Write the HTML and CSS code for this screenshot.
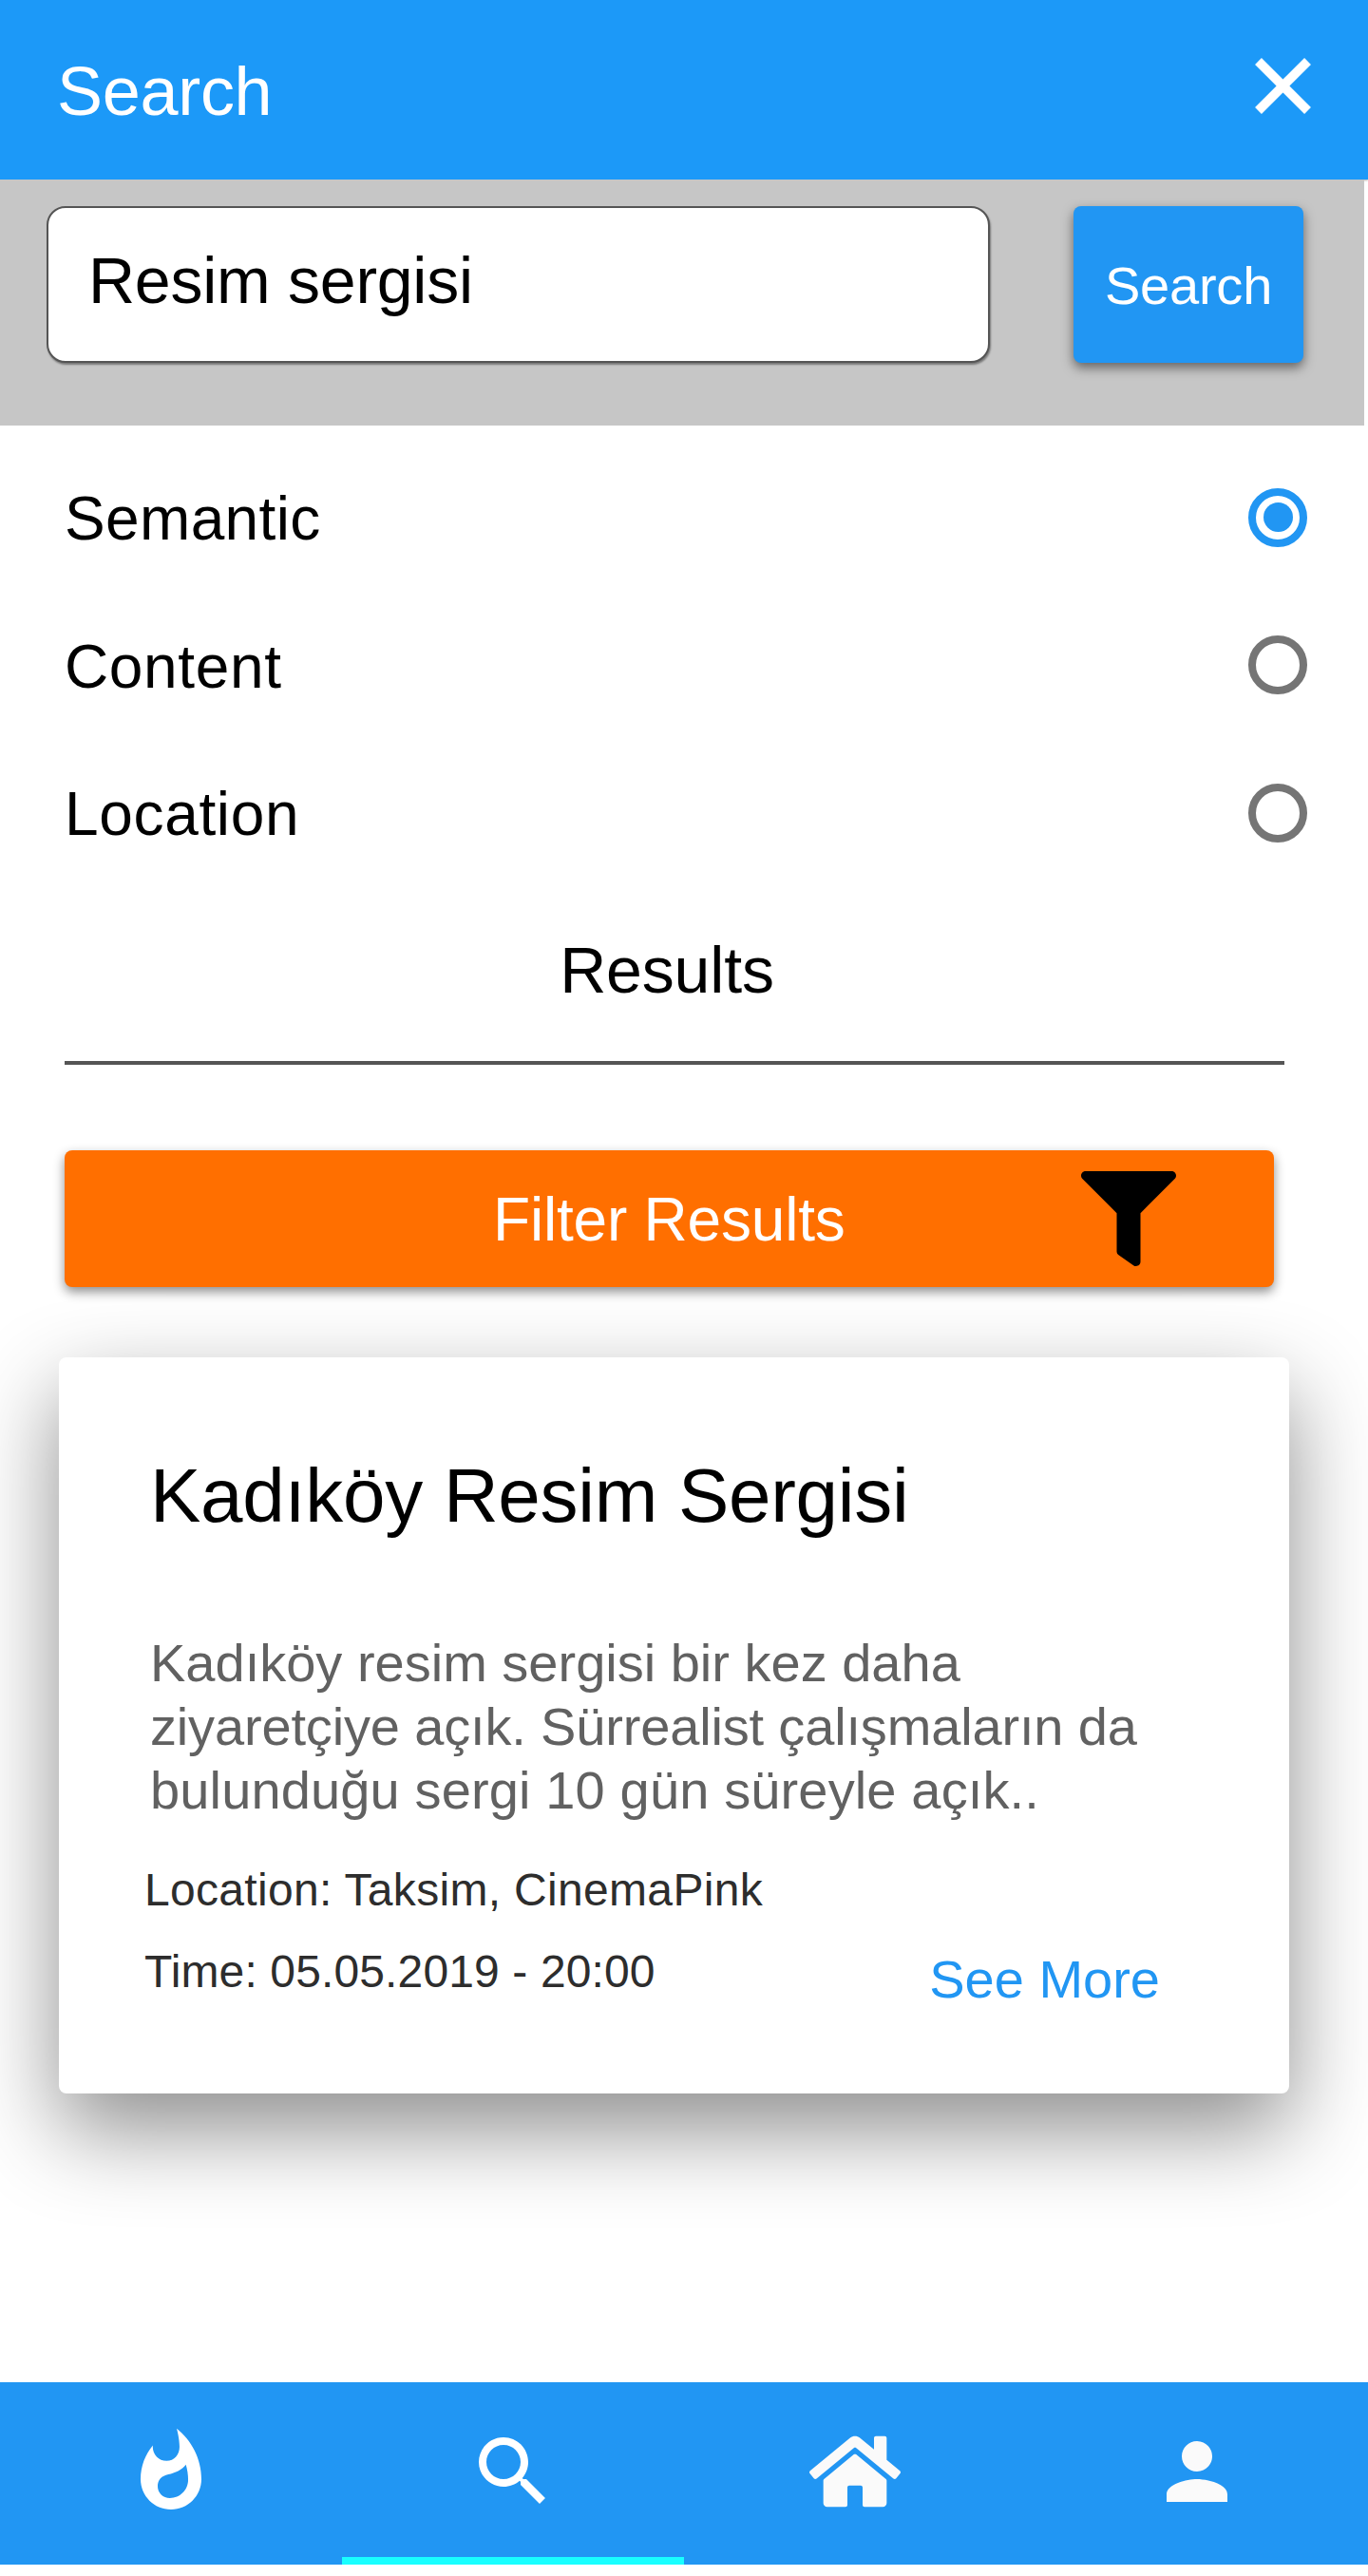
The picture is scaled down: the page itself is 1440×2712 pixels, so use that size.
FILE: index.html
```html
<!DOCTYPE html>
<html lang="tr">
<head>
  <meta charset="utf-8">
  <title>Search</title>
  <link rel="stylesheet" href="styles.css">
</head>
<body>
  <div class="app">
    <header class="topbar">
      <h1 class="topbar-title">Search</h1>
      <svg class="topbar-close" viewBox="0 0 24 24"><path d="M19 6.64L17.36 5 12 10.36 6.64 5 5 6.64 10.36 12 5 17.36 6.64 19 12 13.64 17.36 19 19 17.36 13.64 12z"/></svg>
    </header>

    <form class="searchbar">
      <input class="search-input" type="text" value="Resim sergisi">
      <button class="search-button" type="button">Search</button>
    </form>

    <main class="content">
      <ul class="options">
        <li class="option"><span class="option-label">Semantic</span><span class="radio radio-on"></span></li>
        <li class="option"><span class="option-label option-label-wide">Content</span><span class="radio"></span></li>
        <li class="option"><span class="option-label option-label-wide">Location</span><span class="radio"></span></li>
      </ul>

      <h2 class="results-title">Results</h2>

      <button class="filter" type="button">
        <span class="filter-label">Filter Results</span>
        <svg class="filter-icon" viewBox="0 0 512 512"><path d="M487.976 0H24.028C2.71 0-8.047 25.866 7.058 40.971L192 225.941V432c0 7.831 3.821 15.17 10.237 19.662l80 55.98C298.02 518.69 320 507.493 320 487.98V225.941l184.947-184.97C520.021 25.896 509.338 0 487.976 0z"/></svg>
      </button>

      <article class="card">
        <h3 class="card-title">Kadıköy Resim Sergisi</h3>
        <p class="card-text">Kadıköy resim sergisi bir kez daha<br><span class="tight">ziyaretçiye açık. Sürrealist çalışmaların da</span><br><span class="loose">bulunduğu sergi 10 gün süreyle açık..</span></p>
        <p class="card-place">Location: Taksim, CinemaPink</p>
        <div class="card-foot">
          <span class="card-time">Time: 05.05.2019 - 20:00</span>
          <a class="card-more">See More</a>
        </div>
      </article>
    </main>

    <nav class="tabs">
      <a class="tab"><svg class="icon" viewBox="0 0 24 24"><path d="M13.5.67s.74 2.65.74 4.8c0 2.06-1.35 3.73-3.41 3.73-2.07 0-3.63-1.67-3.63-3.73l.03-.36C5.21 7.51 4 10.62 4 14c0 4.42 3.58 8 8 8s8-3.58 8-8C20 8.61 17.41 3.8 13.5.67zM11.71 19c-1.78 0-3.22-1.4-3.22-3.14 0-1.62 1.05-2.76 2.81-3.12 1.77-.36 3.6-1.21 4.62-2.58.39 1.29.59 2.65.59 4.04 0 2.65-2.15 4.8-4.8 4.8z"/></svg></a>
      <a class="tab tab-active"><svg class="icon" viewBox="0 0 24 24"><path d="M15.5 14h-.79l-.28-.27C15.41 12.59 16 11.11 16 9.5 16 5.91 13.09 3 9.5 3S3 5.91 3 9.5 5.91 16 9.5 16c1.61 0 3.09-.59 4.23-1.57l.27.28v.79l5 4.99L20.49 19l-4.99-5zm-6 0C7.01 14 5 11.99 5 9.5S7.01 5 9.5 5 14 7.01 14 9.5 11.99 14 9.5 14z"/></svg></a>
      <a class="tab"><svg class="icon icon-soft" viewBox="0 -32 576 576"><path d="M488 312.7V456c0 13.3-10.7 24-24 24H348c-6.6 0-12-5.4-12-12V356c0-6.6-5.4-12-12-12h-72c-6.6 0-12 5.4-12 12v112c0 6.6-5.4 12-12 12H112c-13.3 0-24-10.7-24-24V312.7c0-3.6 1.6-7 4.4-9.3l188-154.8c4.4-3.6 10.8-3.6 15.3 0l188 154.8c2.7 2.3 4.3 5.7 4.3 9.3zm83.6-60.9L488 182.9V44.4c0-6.6-5.4-12-12-12h-56c-6.6 0-12 5.4-12 12V117l-89.5-73.7c-17.7-14.6-43.3-14.6-61 0L4.4 251.8c-5.1 4.2-5.8 11.8-1.6 16.9l25.5 31c4.2 5.1 11.8 5.8 16.9 1.6l235.2-193.7c4.4-3.6 10.8-3.6 15.3 0l235.2 193.7c5.1 4.2 12.7 3.5 16.9-1.6l25.5-31c4.2-5.2 3.4-12.7-1.7-16.9z"/></svg></a>
      <a class="tab"><svg class="icon icon-soft" viewBox="0 0 24 24"><path d="M12 12c2.21 0 4-1.79 4-4s-1.79-4-4-4-4 1.79-4 4 1.79 4 4 4zm0 2c-2.67 0-8 1.34-8 4v2h16v-2c0-2.66-5.33-4-8-4z"/></svg></a>
    </nav>
  </div>
</body>
</html>
```
FILE: styles.css
```css
* {
  box-sizing: border-box;
}

body {
  margin: 0;
  background: #fff;
}

body,
input,
button {
  font-family: "Liberation Sans", Arial, Helvetica, sans-serif;
}

h1, h2, h3, p, ul {
  margin: 0;
  padding: 0;
  font-weight: 400;
}

.app {
  display: flex;
  flex-direction: column;
  width: 1440px;
  height: 2712px;
  padding-bottom: 12px;
  overflow: hidden;
}

.topbar {
  display: flex;
  justify-content: space-between;
  flex: none;
  height: 189px;
  padding: 40px 39px 0 60px;
  background: #1c99f8;
  box-shadow: 0 1px 2px rgba(0, 0, 0, .3);
}

.topbar-title {
  margin-top: 14px;
  color: #fff;
  font-size: 72px;
  letter-spacing: -.3px;
  line-height: 84px;
}

.topbar-close {
  width: 101px;
  height: 101px;
  fill: #fff;
}

.searchbar {
  position: relative;
  display: flex;
  justify-content: space-between;
  flex: none;
  width: 1436px;
  height: 259px;
  padding: 28px 64px 66px 49px;
  background: #c6c6c6;
}

.search-input {
  width: 993px;
  height: 165px;
  padding: 0 0 10px 42px;
  border: 2px solid #555;
  border-radius: 20px;
  background: #fff;
  color: #000;
  font-size: 68px;
  letter-spacing: -.25px;
  box-shadow: 1px 2px 2px rgba(0, 0, 0, .4);
}

.search-button {
  width: 242px;
  height: 165px;
  padding: 2px 0 0;
  border: 0;
  border-radius: 8px;
  background: #2196f3;
  color: #fff;
  font-size: 56px;
  letter-spacing: -.2px;
  box-shadow: 0 5px 12px rgba(0, 0, 0, .5);
}

.content {
  display: flex;
  flex-direction: column;
  padding: 19px 83px 0 62px;
}

.options {
  margin: 0 -19px 0 6px;
  list-style: none;
}

.option {
  display: flex;
  align-items: center;
  justify-content: space-between;
  height: 155.5px;
  color: #000;
  font-size: 64px;
}

.option-label {
  padding-top: 3px;
  letter-spacing: .35px;
}

.option-label-wide {
  letter-spacing: .65px;
}

.radio {
  display: grid;
  place-items: center;
  width: 62px;
  height: 62px;
  border: 8px solid #757575;
  border-radius: 50%;
}

.radio-on {
  border-color: #2196f3;
}

.radio-on::after {
  content: "";
  width: 31px;
  height: 31px;
  border-radius: 50%;
  background: #2196f3;
}

.results-title {
  height: 140px;
  margin: 47px 5px 0 6px;
  padding: 0 16px 0 0;
  border-bottom: 4px solid #555;
  color: #000;
  font-size: 68px;
  letter-spacing: -.15px;
  line-height: 80px;
  text-align: center;
}

.filter {
  display: flex;
  align-items: center;
  justify-content: space-between;
  height: 144px;
  margin: 90px 16px 0 6px;
  padding: 0 103px 0 451px;
  border: 0;
  border-radius: 8px;
  background: #ff6f00;
  color: #fff;
  font-size: 64px;
  box-shadow: 0 5px 12px rgba(0, 0, 0, .45);
}

.filter-label {
  padding-top: 3px;
  letter-spacing: -.2px;
}

.filter-icon {
  width: 100px;
  height: 100px;
  fill: #000;
}

.card {
  height: 775px;
  margin-top: 74px;
  padding: 98px 96px 0 90px;
  border-radius: 8px;
  background: #fff;
  box-shadow: 0 38px 94px rgba(0, 0, 0, .45);
}

.card-title {
  padding-left: 6px;
  color: #000;
  font-size: 80px;
  letter-spacing: -.3px;
  line-height: 96px;
}

.card-text {
  margin-top: 94px;
  padding-left: 6px;
  color: #616161;
  font-size: 56px;
  line-height: 67.2px;
  white-space: nowrap;
}

.tight {
  letter-spacing: -.16px;
}

.loose {
  letter-spacing: .14px;
}

.card-place,
.card-time {
  color: #2d2d2d;
  font-size: 48px;
  line-height: 56px;
}

.card-place {
  margin-top: 44px;
  letter-spacing: .32px;
}

.card-time {
  letter-spacing: .13px;
}

.card-foot {
  display: flex;
  justify-content: space-between;
  margin-top: 30px;
  padding-right: 40px;
}

.card-more {
  margin-top: 4px;
  color: #2196f3;
  font-size: 56px;
  line-height: 64px;
}

.tabs {
  display: grid;
  grid-template-columns: repeat(4, 1fr);
  flex: none;
  height: 192px;
  margin-top: auto;
  background: #2196f3;
}

.tab {
  display: flex;
  justify-content: center;
  padding-top: 46px;
}

.tab-active {
  border-bottom: 8px solid #18ffff;
}

.icon {
  width: 96px;
  height: 96px;
  fill: #fff;
}

.icon-soft {
  fill: #fafafa;
}
```
